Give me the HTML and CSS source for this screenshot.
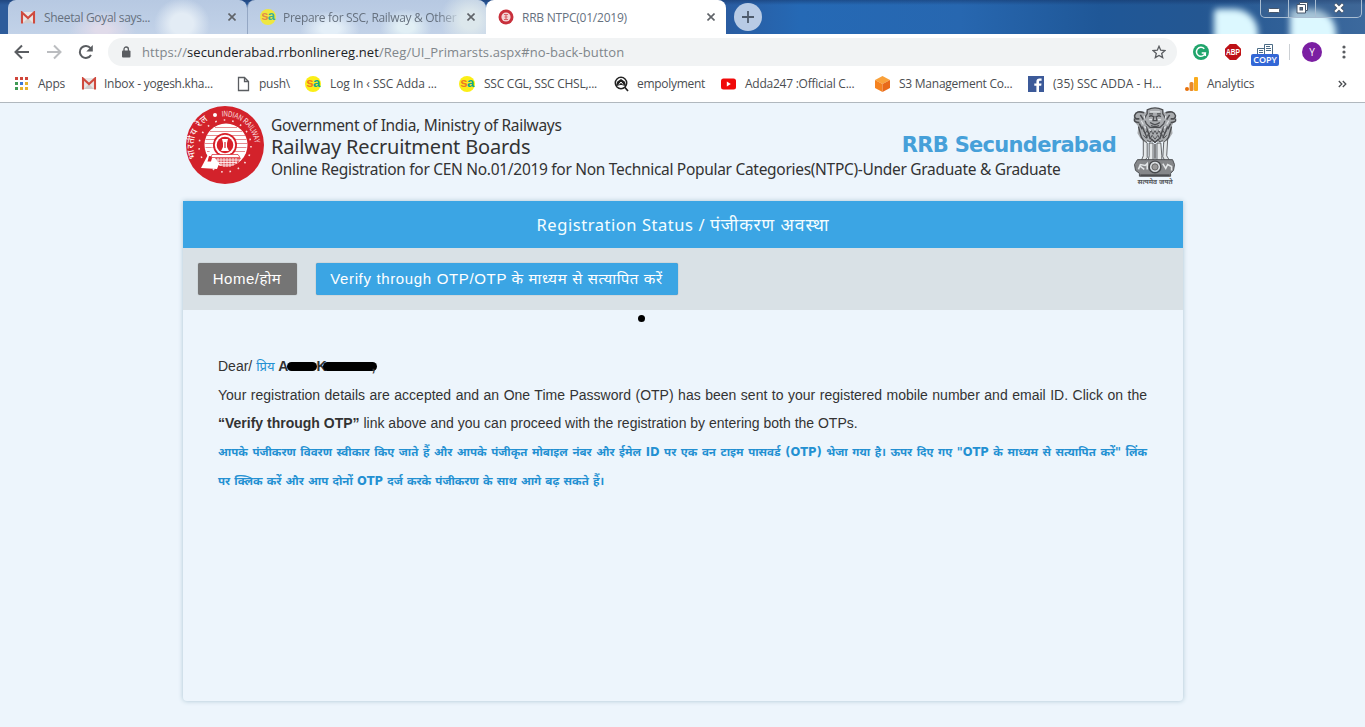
FILE: index.html
```html
<!DOCTYPE html>
<html lang="en">
<head>
  <meta charset="UTF-8">
  <title>RRB NTPC(01/2019)</title>
  <link rel="stylesheet" href="styles.css">
</head>
<body>
<svg width="0" height="0" class="defs">
  <symbol id="gmail" viewBox="0 0 16 13">
    <path d="M1 1h14v11H1z" fill="#e9e6e6"/>
    <path d="M3 12L8 7l5 5z" fill="#d0cccc"/>
    <path d="M2 12.500V1.500L8 7l6-5.500v11" fill="none" stroke="#cf4a3e" stroke-width="2.100"/>
  </symbol>
  <symbol id="cross" viewBox="0 0 8 8">
    <path d="M.5.5l7 7M7.500.500l-7 7" stroke="#5f6368" stroke-width="1.600"/>
  </symbol>
</svg>

<div class="tabs">
  <div class="tab first">
    <svg class="fav" width="16" height="13"><use href="#gmail"/></svg>
    <span class="tab_text t1">Sheetal Goyal says...</span>
    <svg class="x" width="8" height="8"><use href="#cross"/></svg>
  </div>
  <div class="tab second">
    <span class="sa"><i>s</i><b>a</b></span>
    <span class="tab_text t2">Prepare for SSC, Railway &amp; Other</span>
    <svg class="x" width="8" height="8"><use href="#cross"/></svg>
  </div>
  <div class="tab active">
    <svg class="fav" width="16" height="16" viewBox="0 0 16 16">
      <circle cx="8" cy="8" r="7.500" fill="#c8303c"/>
      <circle cx="8" cy="8" r="4.600" fill="#f3d5d7"/>
      <path d="M6 5.500h4M6.500 8h3M6 10.500h4M8 5.500v5" stroke="#d8606a" stroke-width="1.100"/>
    </svg>
    <span class="tab_text t3">RRB NTPC(01/2019)</span>
    <svg class="x" width="8" height="8"><use href="#cross"/></svg>
  </div>
  <div class="new_tab">
    <svg width="12" height="12" viewBox="0 0 12 12"><path d="M6 0v12M0 6h12" stroke="#4d5a6b" stroke-width="1.800"/></svg>
  </div>
  <div class="glow"></div>
  <div class="glow glow2"></div>
  <div class="win_btns">
    <span class="wb"><svg width="14" height="18" viewBox="0 0 14 18"><rect x="1.500" y="8.500" width="11" height="4" rx="1" fill="#fff" stroke="#46566b"/></svg></span>
    <span class="wb"><svg width="14" height="18" viewBox="0 0 14 18"><path d="M4.500 2.500h8v8h-2v2.500h-8.500v-8.500h2.500z" fill="#fff" stroke="#46566b"/><path d="M4.500 4.500h6v6" fill="none" stroke="#46566b"/><rect x="5" y="7.500" width="2.500" height="2.500" fill="#5c718b" stroke="#46566b"/></svg></span>
    <span class="wb last"><svg width="14" height="18" viewBox="0 0 14 18"><path d="M3 4l8 8M11 4l-8 8" stroke="#46566b" stroke-width="4"/><path d="M3.200 4.200l7.600 7.600M10.800 4.200l-7.600 7.600" stroke="#fff" stroke-width="2.300"/></svg></span>
  </div>
</div>

<div class="toolbar">
  <svg class="nav" width="16" height="16" viewBox="0 0 16 16"><path d="M15 8H2M8 1.500L1.500 8 8 14.500" fill="none" stroke="#5a5d61" stroke-width="2"/></svg>
  <svg class="nav" width="16" height="16" viewBox="0 0 16 16"><path d="M1 8h13M8 1.500L14.500 8 8 14.500" fill="none" stroke="#bbbdc0" stroke-width="2"/></svg>
  <svg class="nav" width="16" height="16" viewBox="0 0 16 16"><path d="M13 11A6 6 0 1 1 12.500 4.200" fill="none" stroke="#5a5d61" stroke-width="2"/><path d="M14.800 1v6.500H8.300z" fill="#5a5d61"/></svg>
  <div class="omnibox">
    <svg width="10" height="12" viewBox="0 0 10 12"><rect x="1" y="4.500" width="8.500" height="7" rx="1" fill="#5a5d61"/><path d="M3 5V3.200a2.200 2.200 0 0 1 4.400 0V5" fill="none" stroke="#5a5d61" stroke-width="1.300"/></svg>
    <span class="url">https://<b>secunderabad.rrbonlinereg.net</b>/Reg/UI_Primarsts.aspx#no-back-button</span>
    <svg class="star" width="14" height="14" viewBox="0 0 14 14"><path d="M7 1.300l1.700 3.900 4.200.400-3.200 2.800 1 4.200L7 10.400l-3.700 2.200 1-4.200L1.100 5.600l4.200-.400z" fill="none" stroke="#5a5d61" stroke-width="1.300"/></svg>
  </div>
  <svg class="ext_g" width="16" height="16" viewBox="0 0 16 16"><circle cx="8" cy="8" r="8" fill="#20a56c"/><path d="M11.300 4.800A4.500 4.500 0 1 0 12.300 9H8.700M12.300 9v3" fill="none" stroke="#fff" stroke-width="1.500"/></svg>
  <svg class="ext_abp" width="16" height="16" viewBox="0 0 16 16"><path d="M4.800 0h6.400L16 4.800v6.400L11.200 16H4.800L0 11.200V4.800z" fill="#bd1116"/><text x="1" y="11" font-size="8.500" font-weight="bold" fill="#fff" textLength="14" lengthAdjust="spacingAndGlyphs">ABP</text></svg>
  <div class="ext_copy">
    <svg width="18" height="10" viewBox="0 0 18 10"><path d="M1.500 10V4.500h7M8.500 10V.500h8V10M3 6.500h4M3 8.500h4M10 2.500h4M10 4.500h5M10 6.500h5" fill="none" stroke="#4c6c86"/></svg>
    <span>COPY</span>
  </div>
  <div class="avatar">Y</div>
  <svg class="dots" width="4" height="14" viewBox="0 0 4 14"><circle cx="2" cy="2" r="1.600"/><circle cx="2" cy="7" r="1.600"/><circle cx="2" cy="12" r="1.600"/></svg>
</div>

<div class="bookmarks">
  <div class="bm"><svg width="16" height="14" viewBox="0 0 16 14">
    <path d="M1 0h3v3H1zM6 0h3v3H6zM11 0h3v3h-3z" fill="#d0453a"/>
    <path d="M1 5h3v3H1zM1 10h3v3H1z" fill="#3f9a55"/>
    <path d="M6 5h3v3H6z" fill="#3b78d8"/>
    <path d="M11 5h3v3h-3zM11 10h3v3h-3zM6 10h3v3H6z" fill="#e6b32e"/></svg><span class="b1">Apps</span></div>
  <div class="bm"><svg width="16" height="13"><use href="#gmail"/></svg><span class="b2">Inbox - yogesh.kha...</span></div>
  <div class="bm"><svg width="16" height="16" viewBox="0 0 16 16"><path d="M2.500 1.500h6l4 4v9h-10zM8.500 1.500v4h4" fill="none" stroke="#5a5d61" stroke-width="1.300"/></svg><span class="b3">push\</span></div>
  <div class="bm"><div class="sa"><i>s</i><b>a</b></div><span class="b4">Log In ‹ SSC Adda ...</span></div>
  <div class="bm"><div class="sa"><i>s</i><b>a</b></div><span class="b5">SSC CGL, SSC CHSL,...</span></div>
  <div class="bm"><svg width="16" height="16" viewBox="0 0 16 16"><circle cx="8" cy="7" r="5.700" fill="none" stroke="#222" stroke-width="1.500"/><path d="M4 9l1-3 3-2 3 2 1 3-4-1zM11.500 11l3.500 4" fill="#222" stroke="#222" stroke-width="1.700"/><path d="M6 8.500L8 6l2 2.500" fill="none" stroke="#fff"/></svg><span class="b6">empolyment</span></div>
  <div class="bm"><svg width="16" height="16" viewBox="0 0 16 16"><rect x="1" y="2.500" width="15" height="11" rx="2.500" fill="#f00a0a"/><path d="M6.800 5.500v5l4-2.500z" fill="#fff"/></svg><span class="b7">Adda247 :Official C...</span></div>
  <div class="bm"><svg width="16" height="16" viewBox="0 0 16 16"><path d="M8.500 0L16 4l-7.500 4L1 4z" fill="#f9a13a"/><path d="M1 4l7.500 4v8L1 12z" fill="#f58220"/><path d="M16 4L8.500 8v8L16 12z" fill="#e86a1a"/></svg><span class="b8">S3 Management Co...</span></div>
  <div class="bm"><svg width="16" height="16" viewBox="0 0 16 16"><path d="M0 0h16v16H0z" fill="#3c5a99"/><path d="M11 16V9.800h2.200l.300-2.400H11V6c0-.800.300-1.200 1.300-1.200h1.300V2.500h-2C9.500 2.500 8.400 3.700 8.400 5.700v1.700H6.300v2.400h2.100V16z" fill="#fff"/></svg><span class="b9">(35) SSC ADDA - H...</span></div>
  <div class="bm"><svg width="16" height="16" viewBox="0 0 16 16"><rect x="1" y="11" width="4" height="4" rx="2" fill="#e8710a"/><rect x="5.500" y="6" width="4" height="9" rx="1.500" fill="#e88a2a"/><rect x="10" y="1" width="4" height="14" rx="1" fill="#f9ab1c"/></svg><span class="b10">Analytics</span></div>
  <svg class="more" width="9" height="8" viewBox="0 0 9 8"><path d="M.8 1l3 3-3 3M4.800 1l3 3-3 3" fill="none" stroke="#4a4d51" stroke-width="1.300"/></svg>
</div>

<div class="page">
  <div class="header">
    <svg class="logo" width="80" height="80" viewBox="0 0 80 80">
      <circle cx="40" cy="40" r="39" fill="#d3222b"/>
      <path id="arcR" d="M37 11.500A30 30 0 0 1 70 40" fill="none"/>
      <path id="arcL" d="M11 53A31 31 0 0 1 27 13" fill="none"/>
      <text font-size="8" fill="#fbe3e4"><textPath href="#arcR" textLength="47" lengthAdjust="spacingAndGlyphs">INDIAN RAILWAY</textPath></text>
      <text font-size="9.500" fill="#fff"><textPath href="#arcL" textLength="43">भारतीय रेल</textPath></text>
      <circle cx="30" cy="10" r="2" fill="#fff"/>
      <circle cx="40" cy="41" r="26" fill="none" stroke="#fbd9da" stroke-width="1.600" stroke-dasharray="1.600 7"/>
      <circle cx="41" cy="40" r="21.500" fill="#fff"/>
      <path d="M30 22.500h22M25 26.500h32M22 30.500h38M20.500 34.500h41M20 38.500h42M20.500 42.500h41M22 46.500h38" stroke="#e58a8e" stroke-width="1"/>
      <path d="M27 42L16 63l16 1 4-10z" fill="#fff"/>
      <path d="M24 51l3.500.500-1.500 5h-3.500z" fill="#d8202a"/>
      <path d="M30 53h26l-3 5-9 4-8-1z" fill="#e0555c"/>
      <path d="M30 55h25M30 57.500h22M34 60h15M33 53v6M36 53v8M39 53v9M42 53v9M45 53v9M48 53v7M51 53v6" stroke="#fff" stroke-width=".8"/>
      <circle cx="40" cy="40" r="12" fill="#d8202a"/>
      <circle cx="40" cy="40" r="10.200" fill="#fff"/>
      <circle cx="40" cy="40" r="8.300" fill="#d8202a"/>
      <path d="M37 34h6l-1 4v4l2 4h-8l2-4v-4z" fill="#fff"/>
      <path d="M40 37v6" stroke="#d8202a" stroke-width="1.200"/>
      <path d="M27 49.500h26l2 3H26z" fill="#fff" stroke="#d8202a" stroke-width=".7"/>
    </svg>
    <div class="titles">
      <div class="gov">Government of India, Ministry of Railways</div>
      <div class="boards">Railway Recruitment Boards</div>
      <div class="cen">Online Registration for CEN No.01/2019 for Non Technical Popular Categories(NTPC)-Under Graduate &amp; Graduate</div>
    </div>
    <div class="region">RRB Secunderabad</div>
    <svg class="emblem" width="46" height="78" viewBox="0 0 46 80">
      <path d="M15 3q8-4 16 0l1 3q6-3 10 1 3 4 0 9l-2 4 1 7-4 6-3 3H12l-4-4-3-5 1-7-4-5q-2-5 1-9 4-3 10 0z" fill="#a9acaf"/>
      <g fill="none" stroke="#4b4d50">
        <path d="M15 3q8-4 16 0v4q4 4 1 10l-4 4H18l-4-4q-3-6 1-10z" stroke-width="1.300"/>
        <path d="M17 7h4M25 7h4M17 10q2-2 4 0M25 10q2-2 4 0M22 9l-1 5h4l-1-5M18 16q5 4 10 0M19 19q4 2 8 0" stroke-width="1.300"/>
        <path d="M12 6Q4 3 2 9q0 4 5 3M2 12q-1 4 5 4M34 6q8-3 10 3 0 4-5 3M44 12q1 4-5 4" stroke-width="1.600"/>
        <path d="M8 8l3 5M38 8l-3 5M7 17l3 6M39 17l-3 6" stroke-width="1.500"/>
        <path d="M6 20l3 11 5 7M40 20l-3 11-5 7M10 20l5 12M36 20l-5 12M14 20l4 12 5 4 5-4 4-12" stroke-width="1.300"/>
        <path d="M11 24l2 3 2-3 2 4 2-4 2 4 2-4 2 4 2-4 2 4 2-4 2 3 2-3M11 29l3 3 2-4 2 5 2-4 3 4 3-4 2 4 2-5 2 4 3-3M15 34l3 2 2-3 3 4 3-4 2 3 3-2" stroke-width=".9"/>
      </g>
      <path d="M9 14l2 4M12 9l1 5M34 9l-1 5M37 14l-2 4M12 20l2 2M34 20l-2 2M17 23l2 1M29 23l-2 1M23 22v2M17 13h3M26 13h3M18 5h10" stroke="#dfe3e6" stroke-width="1.200"/>
      <path d="M11 34l4 3v15l-3 3H9l2-5zM17 37h4v18h-5l1-5zM25 37h4l1 13v5h-5zM32 36l4-3-1 17 3 5h-5l-2-4z" fill="#e4e8ea" stroke="#505255" stroke-width=".9"/>
      <path d="M23 38v15" stroke="#444" stroke-width="1.300"/>
      <path d="M5 54h36l2 5-1 6-3 3v3H7v-3l-4-3-1-6z" fill="#85878a" stroke="#4c4e51"/>
      <circle cx="23" cy="61.500" r="6" fill="#d8dcdf" stroke="#47494c" stroke-width="1.500"/>
      <circle cx="23" cy="61.500" r="3.200" fill="#999" stroke="#666"/>
      <path d="M6 64l2-5 5 1 2-2v6M31 58l3 5 2-4 4 2v4M8 61l4 3" fill="none" stroke="#e2e5e7" stroke-width="1.600"/>
      <path d="M8 70h30" stroke="#4a4c4f" stroke-width="1.800"/>
      <text x="5" y="78.500" font-size="7" font-weight="bold" fill="#55585b" textLength="36" lengthAdjust="spacingAndGlyphs">सत्यमेव जयते</text>
    </svg>
  </div>

  <div class="card">
    <div class="card_title">Registration Status / <span class="hi">पंजीकरण अवस्था</span></div>
    <div class="card_nav">
      <a class="btn home"><span>Home/होम</span></a>
      <a class="btn verify"><span>Verify through OTP/OTP के माध्यम से सत्यापित करें</span></a>
    </div>
    <div class="card_body">
      <i class="bullet"></i>
      <div class="line">Dear/ <span class="priya">प्रिय</span> <b class="name">A<i class="ink ink1"></i>K<i class="ink ink2"></i>,</b></div>
      <div class="line full">Your registration details are accepted and an One Time Password (OTP) has been sent to your registered mobile number and email ID. Click on the</div>
      <div class="line"><b>“Verify through OTP”</b> link above and you can proceed with the registration by entering both the OTPs.</div>
      <div class="line full hindi">आपके पंजीकरण विवरण स्वीकार किए जाते हैं और आपके पंजीकृत मोबाइल नंबर और ईमेल ID पर एक वन टाइम पासवर्ड (OTP) भेजा गया है। ऊपर दिए गए "OTP के माध्यम से सत्यापित करें" लिंक</div>
      <div class="line hindi last_line">पर क्लिक करें और आप दोनों OTP दर्ज करके पंजीकरण के साथ आगे बढ़ सकते हैं।</div>
    </div>
  </div>
</div>
</body>
</html>
```
FILE: styles.css
```css
* {
  box-sizing: border-box;
}

body {
  margin: 0;
  height: 727px;
  overflow: hidden;
  background: #edf5fc;
  font-family: "Liberation Sans", "Noto Sans", sans-serif;
  color: #333;
  white-space: nowrap;
}

svg {
  flex: none;
}

.defs {
  position: absolute;
}

/* tab strip */
.tabs {
  height: 34px;
  padding-left: 8px;
  display: flex;
  position: relative;
  overflow: hidden;
  background:
    linear-gradient(to bottom, rgba(20, 50, 100, 0.5), transparent 5px),
    linear-gradient(to right, #2d5c9b 0, #2a5b9f 720px, #2569b5 800px, #2767b0 960px, #1f5797 1100px, #245792 1200px, #3c699d 1365px);
}

.glow {
  position: absolute;
  left: 1214px;
  top: 9px;
  width: 44px;
  height: 36px;
  border-radius: 4px 24px 0 0;
  background: #dcf8ff;
  filter: blur(3px);
}

.glow2 {
  left: 1290px;
  width: 46px;
}

.tab {
  width: 239px;
  display: flex;
  align-items: center;
  padding: 0 11px 0 12px;
  font: 12px "Open Sans", "Noto Sans", sans-serif;
  color: #66717f;
  border-radius: 8px 8px 0 0;
}

.first {
  background:
    radial-gradient(ellipse 28px 26px at 174px 24px, #e3ecf5 40%, transparent 100%),
    radial-gradient(ellipse 34px 20px at 94px 30px, #e0dbea 20%, transparent 100%),
    linear-gradient(to bottom, #b7c9e2, #c2d2e8);
}

.second {
  border-left: 1px solid #94a7c4;
  background:
    radial-gradient(ellipse 30px 18px at 82px 29px, #e4eff8 30%, transparent 100%),
    radial-gradient(ellipse 26px 18px at 158px 27px, #e1eff5 30%, transparent 100%),
    radial-gradient(ellipse 30px 30px at 222px 20px, #dce7ec 30%, transparent 100%),
    linear-gradient(to bottom, #b7c9e2, #c2d2e8);
}

.active {
  width: 240px;
  background: #fff;
}

.tab_text {
  flex: 1;
  margin-left: 8px;
  overflow: hidden;
}

.t1 {
  letter-spacing: -0.32px;
}

.t2 {
  margin-left: 7px;
  letter-spacing: -0.32px;
  -webkit-mask-image: linear-gradient(to right, #000 155px, transparent 178px);
  mask-image: linear-gradient(to right, #000 155px, transparent 178px);
}

.t3 {
  letter-spacing: -0.23px;
}

.x {
  margin-left: 8px;
}

.sa {
  flex: none;
  width: 16px;
  height: 16px;
  border-radius: 50%;
  background: #fbee17;
  display: flex;
  justify-content: center;
  font: bold 13px/14px "Liberation Sans", sans-serif;
  letter-spacing: -0.5px;
}

.sa i {
  font-style: normal;
  color: #f07a22;
}

.sa b {
  color: #14a58c;
}

.second .sa {
  opacity: 0.8;
}

.new_tab {
  width: 28px;
  height: 28px;
  margin: 3px 0 0 8px;
  border-radius: 50%;
  background: #b8cbe5;
  display: flex;
  align-items: center;
  justify-content: center;
}

.win_btns {
  position: relative;
  display: flex;
  width: 102px;
  height: 18px;
  margin: 0 3px 0 auto;
  border: 1px solid #a9bdd2;
  border-top: 0;
  border-radius: 0 0 5px 5px;
  background: rgba(70, 100, 140, 0.35);
}

.wb {
  width: 28px;
  display: flex;
  justify-content: center;
  border-right: 1px solid #a9bdd2;
}

.last {
  width: 45px;
  border: 0;
}

/* address bar */
.toolbar {
  height: 36px;
  padding-left: 14px;
  display: flex;
  align-items: center;
  background: #fff;
}

.nav {
  margin-right: 16px;
}

.omnibox {
  width: 1069px;
  height: 28px;
  margin-left: -2px;
  padding: 0 11px 0 13px;
  border-radius: 14px;
  background: #f1f3f4;
  display: flex;
  align-items: center;
}

.url {
  margin-left: 11px;
  font: 13px "Open Sans", "Noto Sans", sans-serif;
  letter-spacing: 0.09px;
  color: #80868b;
}

.url b {
  font-weight: normal;
  color: #202124;
}

.star {
  margin-left: auto;
}

.ext_g {
  margin-left: 16px;
}

.ext_abp {
  margin-left: 16px;
}

.ext_copy {
  width: 28px;
  height: 22px;
  margin: 6px 0 0 10px;
  display: flex;
  flex-direction: column;
  align-items: center;
}

.ext_copy span {
  width: 28px;
  height: 12px;
  border-radius: 2px;
  background: #3367d6;
  color: #fff;
  font: 600 9px/12px "Open Sans", sans-serif;
  text-align: center;
}

.avatar {
  height: 20px;
  width: 20px;
  margin-left: 23px;
  position: relative;
  border-radius: 50%;
  background: #7b1fa2;
  color: #fff;
  font: 10px/20px "Open Sans", sans-serif;
  text-align: center;
}

.avatar:before {
  content: "";
  position: absolute;
  left: -13px;
  top: 2px;
  height: 16px;
  border-left: 1px solid #ccd0d4;
}

.dots {
  margin-left: 20px;
  fill: #5a5d61;
}

/* bookmarks */
.bookmarks {
  height: 33px;
  padding: 0 18px 5px 14px;
  display: grid;
  grid-template-columns: 67px 155px 69px 154px 154px 107px 154px 154px 156px 1fr auto;
  align-items: center;
  background: #fff;
  border-bottom: 1px solid #b1b8be;
  font: 12px "Open Sans", "Noto Sans", sans-serif;
  letter-spacing: -0.25px;
  color: #4a4d51;
}

.bm {
  display: flex;
  align-items: center;
}

.bm span {
  margin-left: 8px;
}

.bm .b2, .bm .b3, .bm .b10 {
  margin-left: 7px;
}

.bm .b5, .bm .b7, .bm .b8, .bm .b9 {
  margin-left: 9px;
}

.bm .b4 {
  margin-left: 9px;
  letter-spacing: -0.1px;
}

.b6 {
  letter-spacing: -0.3px;
}

.b9 {
  letter-spacing: 0;
}

/* page */
.page {
  width: 1000px;
  margin-left: 183px;
}

.header {
  height: 98px;
  display: flex;
  padding: 2px 5px 0 2px;
}

.titles {
  flex: 1;
  width: 0;
  margin: 9px 0 0 6px;
  font-family: "Noto Sans", sans-serif;
  color: #333;
}

.gov {
  font-size: 15.500px;
  line-height: 22px;
  letter-spacing: -0.32px;
}

.boards {
  font-size: 20px;
  line-height: 21px;
  letter-spacing: -0.16px;
}

.cen {
  font-size: 15.500px;
  line-height: 24px;
  letter-spacing: -0.3px;
}

.region {
  margin: 26px 16px 0 0;
  font: bold 21px/28px "DejaVu Sans", sans-serif;
  letter-spacing: -0.7px;
  color: #46a0d9;
}

.emblem {
  margin-top: 2px;
}

.card {
  height: 500px;
  border-radius: 0 0 4px 4px;
  box-shadow: 0 0 5px #abc4d2;
}

.card_title {
  height: 47px;
  line-height: 47px;
  background: #3ba5e4;
  color: #f4fdff;
  font-family: "Noto Sans", sans-serif;
  font-size: 16.500px;
  letter-spacing: 0.550px;
  text-align: center;
}

.hi {
  font-size: 17.500px;
  letter-spacing: 0.900px;
}

.card_nav {
  height: 62px;
  padding: 15px 14.500px;
  display: flex;
  gap: 19px;
  background: #d9e1e6;
}

.btn {
  width: 99px;
  height: 32px;
  border-radius: 2px;
  background: #757575;
  box-shadow: 0 0 1px #777;
  color: #fff;
  font: 15px/32px "Liberation Sans", "Noto Sans", sans-serif;
  letter-spacing: 0.5px;
  text-align: center;
}

.verify {
  width: 362px;
  background: #3ba5e4;
  letter-spacing: 0.650px;
}

.card_body {
  position: relative;
  padding: 42px 36px 0 35px;
}

.bullet {
  position: absolute;
  left: 455px;
  top: 5px;
  width: 7px;
  height: 7px;
  border-radius: 50%;
  background: #000;
}

.line {
  height: 28.500px;
  font-size: 14px;
  line-height: 28.500px;
}

.full {
  text-align-last: justify;
}

.priya {
  color: #2390d2;
  font-size: 13px;
}

/* blacked out part of the name */
.ink {
  display: inline-block;
  height: 9px;
  width: 30px;
  margin: 0 -1px;
  border-radius: 5px;
  background: #000;
}

.ink2 {
  width: 54px;
  margin: 0 -5px 0 -4px;
}

.hindi {
  color: #2390d2;
  font-family: "DejaVu Sans", "Noto Sans", sans-serif;
  font-size: 11.500px;
  font-weight: bold;
}

.last_line {
  padding-top: 1px;
  word-spacing: 0.200px;
}
```
